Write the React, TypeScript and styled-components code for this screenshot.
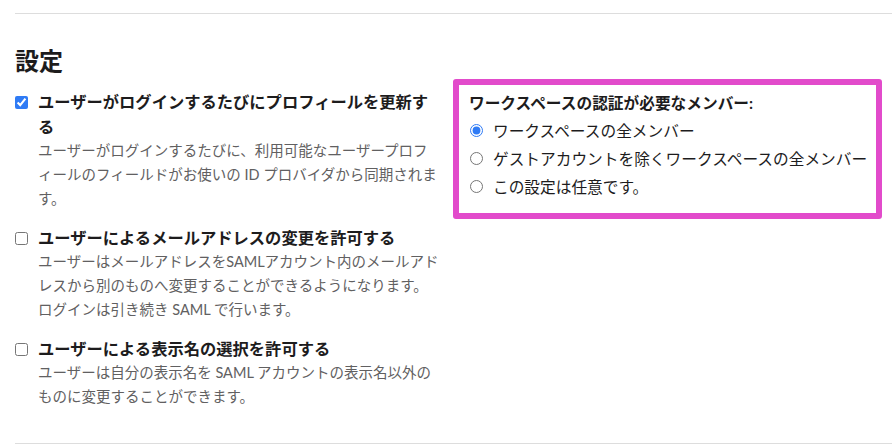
import React from 'react';
import styled, { createGlobalStyle } from 'styled-components';

interface Option {
  id: string;
  label: string;
  description: string;
  checked: boolean;
}

const options: Option[] = [
  {
    id: 'update-profile',
    label: 'ユーザーがログインするたびにプロフィールを更新する',
    description:
      'ユーザーがログインするたびに、利用可能なユーザープロフィールのフィールドがお使いの ID プロバイダから同期されます。',
    checked: true,
  },
  {
    id: 'change-email',
    label: 'ユーザーによるメールアドレスの変更を許可する',
    description:
      'ユーザーはメールアドレスをSAMLアカウント内のメールアドレスから別のものへ変更することができるようになります。ログインは引き続き SAML で行います。',
    checked: false,
  },
  {
    id: 'display-name',
    label: 'ユーザーによる表示名の選択を許可する',
    description:
      'ユーザーは自分の表示名を SAML アカウントの表示名以外のものに変更することができます。',
    checked: false,
  },
];

const scopes = [
  'ワークスペースの全メンバー',
  'ゲストアカウントを除くワークスペースの全メンバー',
  'この設定は任意です。',
];

const App: React.FC = () => {
  return (
    <>
      <GlobalStyle />
      <Page>
        <Section>
          <Title>設定</Title>
          <Columns>
            <List>
              {options.map((option) => (
                <Item key={option.id}>
                  <Check type="checkbox" defaultChecked={option.checked} id={option.id} />
                  <ItemText>
                    <Label htmlFor={option.id}>{option.label}</Label>
                    <Description>{option.description}</Description>
                  </ItemText>
                </Item>
              ))}
            </List>
            <Highlight>
              <BoxTitle>ワークスペースの認証が必要なメンバー:</BoxTitle>
              {scopes.map((scope, i) => (
                <RadioRow key={scope}>
                  <Radio type="radio" name="scope" defaultChecked={i === 0} />
                  <span>{scope}</span>
                </RadioRow>
              ))}
            </Highlight>
          </Columns>
        </Section>
      </Page>
    </>
  );
};

export default App;

const GlobalStyle = createGlobalStyle`
  html, body {
    margin: 0;
    padding: 0;
    background: #ffffff;
  }

  body {
    font-family: Lato, 'Noto Sans CJK JP', sans-serif;
    color: #1d1c1d;
    text-spacing-trim: space-all;
  }
`;

const Page = styled.div`
  width: 892px;
  height: 448px;
  padding: 13px 0 0 15px;
  box-sizing: border-box;
  overflow: hidden;
`;

const Section = styled.section`
  border-top: 1px solid #dddddd;
  border-bottom: 1px solid #dddddd;
  height: 431px;
  box-sizing: border-box;
`;

const Title = styled.h2`
  margin: 31px 0 2px 0;
  font-size: 24px;
  line-height: 32px;
  font-weight: 700;
`;

const Columns = styled.div`
  display: grid;
  grid-template-columns: 427px 429px;
  column-gap: 11px;
  align-items: start;
`;

const List = styled.div`
  padding-top: 10px;
  display: flex;
  flex-direction: column;
  gap: 14px;
`;

const Item = styled.div`
  display: flex;
  align-items: flex-start;
  gap: 10px;
`;

const Check = styled.input`
  width: 13px;
  height: 13px;
  margin: 7px 0 0 0;
  flex-shrink: 0;
  accent-color: #2f7bf5;
`;

const ItemText = styled.div`
  width: 402px;
  flex-shrink: 0;
  display: flex;
  flex-direction: column;
`;

const Label = styled.label`
  font-size: 16.3px;
  line-height: 25px;
  font-weight: 700;
  color: #1d1c1d;
`;

const Description = styled.p`
  margin: 0;
  font-size: 14.5px;
  line-height: 24px;
  color: #616061;
`;

const Highlight = styled.div`
  width: 429px;
  height: 140px;
  box-sizing: border-box;
  border: 6px solid #e24bcb;
  border-radius: 3px;
  padding: 6px 0 0 10px;
`;

const BoxTitle = styled.div`
  font-size: 15.7px;
  line-height: 24px;
  font-weight: 700;
  margin-bottom: 1px;
  white-space: nowrap;
`;

const RadioRow = styled.label`
  display: flex;
  align-items: center;
  gap: 10px;
  height: 28px;
  font-size: 15.7px;
  white-space: nowrap;
  color: #1d1c1d;
`;

const Radio = styled.input`
  width: 13px;
  height: 13px;
  margin: 0 0 0 1px;
  accent-color: #2f7bf5;
`;
